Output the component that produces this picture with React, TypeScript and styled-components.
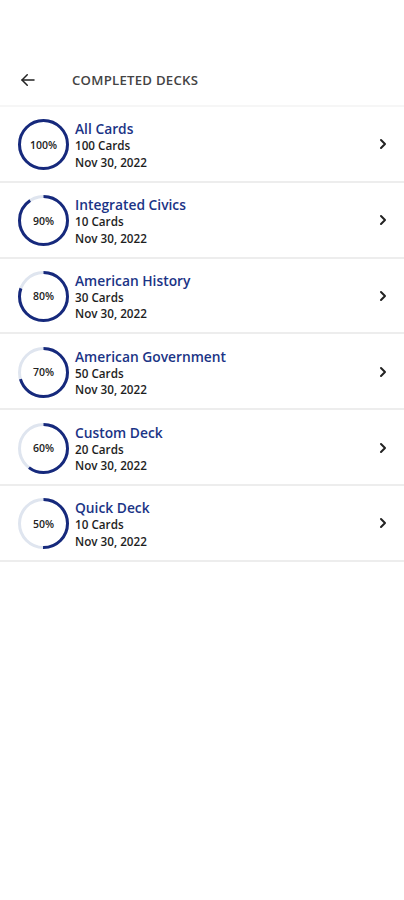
import * as React from 'react';
import styled, { createGlobalStyle } from 'styled-components';

const GlobalStyle = createGlobalStyle`
  html, body {
    margin: 0;
    padding: 0;
    background: #ffffff;
  }
  body {
    font-family: 'Open Sans', 'Liberation Sans', sans-serif;
  }
`;

const NAVY = '#1b3486';

/**
 * Page wrapper.
 */
const Page = styled.div`
  width: 404px;
  min-height: 900px;
  background: #ffffff;
  padding-top: 55px;
  box-sizing: border-box;
`;

/**
 * Top bar with back arrow and title.
 */
const Header = styled.div`
  display: flex;
  align-items: center;
  height: 50px;
  padding-left: 19px;
  border-bottom: 2px solid #f6f6f6;
`;

const BackButton = styled.button`
  display: flex;
  align-items: center;
  justify-content: center;
  width: 18px;
  height: 18px;
  padding: 0;
  margin: 0;
  border: none;
  background: none;
  cursor: pointer;
`;

const Title = styled.h1`
  margin: 0 0 0 35px;
  font-size: 13.2px;
  font-weight: 600;
  color: #444444;
  letter-spacing: 0.25px;
`;

const List = styled.div`
  display: flex;
  flex-direction: column;
`;

/**
 * One deck row.
 */
const Row = styled.div`
  display: flex;
  align-items: center;
  height: 73.8px;
  padding: 0 17px 0 18px;
  border-bottom: 2px solid #ededed;
  cursor: pointer;
`;

const RingWrap = styled.div`
  position: relative;
  width: 51px;
  height: 51px;
  flex-shrink: 0;
  margin-top: 2px;
`;

const RingLabel = styled.span`
  position: absolute;
  inset: 0;
  display: flex;
  align-items: center;
  justify-content: center;
  font-size: 10.5px;
  font-weight: 600;
  color: #222222;
`;

const Info = styled.div`
  display: flex;
  flex-direction: column;
  flex: 1;
  margin-left: 6px;
  margin-top: 3px;
`;

const DeckName = styled.span`
  font-size: 13.8px;
  font-weight: 600;
  color: ${NAVY};
  line-height: 17px;
`;

const Meta = styled.span`
  font-size: 11.7px;
  font-weight: 600;
  color: #1e1e1e;
  line-height: 16.5px;
`;

const Chevron = styled.div`
  display: flex;
  align-items: center;
  margin-top: 1px;
`;

interface RingProps {
  /** percent complete */
  value: number;
}

const Ring: React.FunctionComponent<RingProps> = ({ value }): JSX.Element => {
  const size = 51;
  const stroke = 3;
  const r = (size - stroke) / 2;
  const c = 2 * Math.PI * r;
  return (
    <RingWrap>
      <svg width={size} height={size} viewBox={`0 0 ${size} ${size}`}>
        <circle cx={size / 2} cy={size / 2} r={r} fill="none" stroke="#dfe5ef" strokeWidth={stroke} />
        <circle
          cx={size / 2}
          cy={size / 2}
          r={r}
          fill="none"
          stroke="#16297c"
          strokeWidth={stroke}
          strokeDasharray={`${(c * value) / 100} ${c}`}
          transform={`rotate(-90 ${size / 2} ${size / 2})`}
        />
      </svg>
      <RingLabel>{value}%</RingLabel>
    </RingWrap>
  );
};

const decks = [
  { name: 'All Cards', cards: 100, pct: 100 },
  { name: 'Integrated Civics', cards: 10, pct: 90 },
  { name: 'American History', cards: 30, pct: 80 },
  { name: 'American Government', cards: 50, pct: 70 },
  { name: 'Custom Deck', cards: 20, pct: 60 },
  { name: 'Quick Deck', cards: 10, pct: 50 },
];

const App: React.FunctionComponent = (): JSX.Element => {
  return (
    <Page>
      <GlobalStyle />
      <Header>
        <BackButton aria-label="Back">
          <svg width="18" height="18" viewBox="0 0 24 24" fill="none" stroke="#222" strokeWidth="2" strokeLinecap="round" strokeLinejoin="round">
            <path d="M20 12H4" />
            <path d="M11 5l-7 7 7 7" />
          </svg>
        </BackButton>
        <Title>COMPLETED DECKS</Title>
      </Header>
      <List>
        {decks.map(d => (
          <Row key={d.name}>
            <Ring value={d.pct} />
            <Info>
              <DeckName>{d.name}</DeckName>
              <Meta>{d.cards} Cards</Meta>
              <Meta>Nov 30, 2022</Meta>
            </Info>
            <Chevron>
              <svg width="8" height="12" viewBox="0 0 8 12" fill="none" stroke="#222" strokeWidth="2" strokeLinecap="round" strokeLinejoin="round">
                <path d="M2 2l4 4-4 4" />
              </svg>
            </Chevron>
          </Row>
        ))}
      </List>
    </Page>
  );
};

export default App;
